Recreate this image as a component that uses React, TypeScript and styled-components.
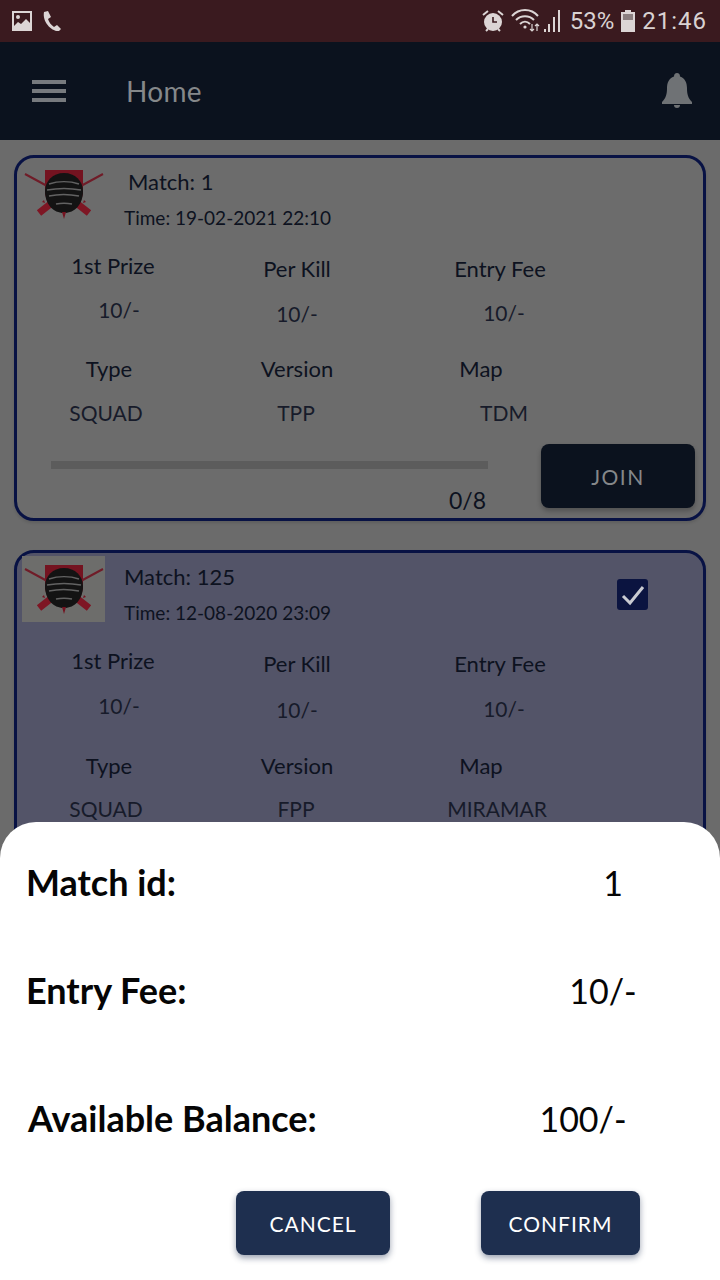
import React from "react";
import styled, { createGlobalStyle } from "styled-components";

const Global = createGlobalStyle`
  html, body { margin: 0; padding: 0; background: #6b6b6b; }
  * { box-sizing: border-box; }
`;

const Screen = styled.div`
  position: relative;
  width: 720px;
  height: 1280px;
  overflow: hidden;
  background: #6b6b6b;
  font-family: Lato, "Liberation Sans", sans-serif;
  display: flex;
  flex-direction: column;
`;

const StatusBar = styled.div`
  flex: none;
  height: 42px;
  background: #3a1a1f;
  color: #d9d2d2;
  display: flex;
  align-items: center;
  justify-content: space-between;
  padding: 0 13px 0 11px;
`;
const StatusGroup = styled.div<{ $gap?: number }>`
  display: flex;
  align-items: center;
  gap: ${(p) => p.$gap ?? 8}px;
`;
const StatusText = styled.span<{ $ls?: number }>`
  font-family: Roboto, sans-serif;
  font-size: 24px;
  line-height: 42px;
  letter-spacing: ${(p) => p.$ls ?? 0}px;
`;

const AppBar = styled.header`
  flex: none;
  height: 98px;
  background: #0b121e;
  display: flex;
  align-items: center;
  padding: 0 28px 0 32px;
`;
const Burger = styled.div`
  width: 34px;
  height: 22px;
  display: flex;
  flex-direction: column;
  justify-content: space-between;
  margin-right: 60px;
  & > i {
    display: block;
    height: 4px;
    background: #777a7e;
  }
`;
const Title = styled.div`
  flex: 1;
  color: #85888a;
  font-size: 28px;
  letter-spacing: 0.3px;
`;

const List = styled.main`
  flex: 1;
  padding: 15px 14px 0;
  display: flex;
  flex-direction: column;
  gap: 29px;
`;
const Card = styled.section<{ $selected?: boolean }>`
  flex: none;
  border: 3px solid #081244;
  border-radius: 20px;
  background: ${(p) => (p.$selected ? "#535468" : "#6c6c6c")};
  padding: ${(p) => (p.$selected ? "3px 5px 0" : "10px 0 0 0")};
  height: ${(p) => (p.$selected ? "400px" : "366px")};
  box-shadow: 0 2px 3px rgba(0, 0, 0, 0.12);
`;
const CardHead = styled.div<{ $selected?: boolean }>`
  display: flex;
  align-items: flex-start;
  height: ${(p) => (p.$selected ? "90px" : "83px")};
  padding-right: ${(p) => (p.$selected ? "50px" : "0")};
`;
const Thumb = styled.div<{ $selected?: boolean }>`
  flex: none;
  width: ${(p) => (p.$selected ? "83px" : "84px")};
  height: ${(p) => (p.$selected ? "66px" : "52px")};
  margin-left: ${(p) => (p.$selected ? "0" : "5px")};
  background: ${(p) => (p.$selected ? "#6d6d6b" : "transparent")};
  display: flex;
  align-items: center;
  justify-content: center;
`;
const HeadText = styled.div<{ $selected?: boolean }>`
  flex: 1;
  padding-left: ${(p) => (p.$selected ? "19px" : "18px")};
  color: #0d1220;
`;
const MatchLine = styled.div<{ $selected?: boolean }>`
  font-size: 22px;
  line-height: 28px;
  margin-left: ${(p) => (p.$selected ? "0" : "4px")};
  margin-top: ${(p) => (p.$selected ? "7px" : "0")};
`;
const TimeLine = styled.div`
  font-size: 19px;
  line-height: 24px;
  margin-top: 10px;
  white-space: nowrap;
`;
const Checkbox = styled.div`
  flex: none;
  width: 31px;
  height: 31px;
  margin-top: 23px;
  border-radius: 3px;
  background: #0b1440;
  display: flex;
  align-items: center;
  justify-content: center;
`;

const StatGrid = styled.div<{ $selected?: boolean }>`
  display: grid;
  grid-template-columns: 192px 176px 230px;
  grid-auto-rows: 46px;
  margin-left: ${(p) => (p.$selected ? "-5px" : "0")};
  row-gap: ${(p) => (p.$selected ? "4px" : "3px")};
`;
const StatCell = styled.div<{ $dx?: number; $dy?: number; $label?: boolean }>`
  text-align: center;
  color: ${(p) => (p.$label ? "#0d1220" : "#171b2a")};
  font-size: ${(p) => (p.$label ? 22 : 21)}px;
  line-height: 30px;
  white-space: nowrap;
  margin-left: ${(p) => p.$dx ?? 0}px;
  margin-top: ${(p) => p.$dy ?? 0}px;
`;

const Footer = styled.div`
  display: flex;
  align-items: flex-start;
  padding: 0 8px 0 34px;
`;
const ProgressWrap = styled.div`
  flex: 1;
  padding-top: 17px;
  margin-right: 53px;
`;
const Track = styled.div`
  height: 8px;
  background: #5c5c5c;
`;
const Count = styled.div`
  text-align: right;
  font-size: 23px;
  line-height: 30px;
  color: #0d1220;
  margin-top: 16px;
  padding-right: 2px;
`;
const JoinButton = styled.button`
  flex: none;
  width: 154px;
  height: 64px;
  border: 0;
  border-radius: 8px;
  background: #0b121e;
  color: #85888a;
  font: 400 21px Lato, sans-serif;
  letter-spacing: 1.5px;
  box-shadow: 0 3px 5px rgba(0, 0, 0, 0.25);
`;

const Sheet = styled.aside`
  position: absolute;
  left: 0;
  right: 0;
  top: 822px;
  bottom: 0;
  background: #fff;
  border-radius: 36px 36px 0 0;
  color: #050505;
`;
const SheetRow = styled.div<{ $top: number; $left: number }>`
  display: grid;
  grid-template-columns: 1fr 160px;
  align-items: center;
  height: 50px;
  margin-top: ${(p) => p.$top}px;
  padding-left: ${(p) => p.$left}px;
  margin-right: 37px;
`;
const SheetLabel = styled.div`
  font-size: 36px;
  font-weight: 700;
  white-space: nowrap;
`;
const SheetValue = styled.div<{ $dx?: number }>`
  font-size: 34px;
  text-align: center;
  margin-left: ${(p) => p.$dx ?? 0}px;
`;
const SheetActions = styled.div`
  display: flex;
  gap: 91px;
  padding: 48px 0 0 236px;
`;
const SheetButton = styled.button<{ $w: number }>`
  width: ${(p) => p.$w}px;
  height: 64px;
  border: 0;
  border-radius: 8px;
  background: #1e2f4f;
  color: #fff;
  font: 400 21px Lato, sans-serif;
  letter-spacing: 1px;
  box-shadow: 0 3px 6px rgba(30, 47, 79, 0.45);
`;

const Logo = () => (
  <svg width="80" height="52" viewBox="0 0 80 52" aria-hidden="true">
    <path d="M21 2h38v24l-4 14H25l-4-14z" fill="#741320" />
    <path d="M1 6l24 13M79 6L55 19" stroke="#701c28" strokeWidth="2" />
    <path d="M29 34L15 45M51 34l14 11" stroke="#7e1624" strokeWidth="7" />
    <path d="M40 5c11 0 19 8 19 18 0 13-8 22-19 22S21 36 21 23C21 13 29 5 40 5z" fill="#131313" />
    <path d="M25 16c9-3 21-3 30 0M23 22c11-2 23-2 34 0M25 28c9-2 20-2 30 0M32 36c5-1 11-1 16 0" stroke="#626262" strokeWidth="1.500" fill="none" />
    <path d="M38 44l2 7 2-7zM20 32l-2 2 3 1zM60 32l2 2-3 1z" fill="#741320" />
  </svg>
);

const ImageIcon = () => (
  <svg width="22" height="22" viewBox="0 0 22 22" aria-hidden="true">
    <path d="M1 1h20v20H1z" fill="#dcd5d5" />
    <path d="M3 3h16v10l-4-4-5 5-3-2-4 4z" fill="#3a1a1f" />
    <circle cx="7" cy="7" r="2" fill="#dcd5d5" />
  </svg>
);
const PhoneIcon = () => (
  <svg width="20" height="22" viewBox="0 0 20 22" aria-hidden="true">
    <path d="M2 2l4-1 3 6-3 2c1 3 3 6 6 8l3-2 4 4-2 2C10 22 0 12 2 2z" fill="#dcd5d5" />
  </svg>
);
const AlarmIcon = () => (
  <svg width="22" height="24" viewBox="0 0 22 24" aria-hidden="true">
    <circle cx="11" cy="13" r="9" fill="#dcd5d5" />
    <path d="M1 6l5-4M21 6l-5-4M4 22l2-2M18 22l-2-2" stroke="#dcd5d5" strokeWidth="2" />
    <path d="M11 8v5h4" stroke="#3a1a1f" strokeWidth="1.600" fill="none" />
  </svg>
);
const SignalIcon = () => (
  <svg width="52" height="26" viewBox="0 0 52 26" aria-hidden="true">
    <g fill="none" stroke="#dcd5d5" strokeWidth="2">
      <path d="M1 8c7-8 19-8 26 0M5 12c5-5 13-5 18 0M9 16c3-3 7-3 10 0" />
    </g>
    <circle cx="14" cy="19" r="1.600" fill="#dcd5d5" />
    <path d="M21 16v7M19 21l2 2 2-2M26 23v-7M24 18l2-2 2 2" stroke="#dcd5d5" strokeWidth="1.200" fill="none" />
    <path d="M33 21h2v3h-2zM37 16h2v8h-2zM42 9h2v15h-2zM47 2h2v22h-2z" fill="#dcd5d5" />
  </svg>
);
const BatteryIcon = () => (
  <svg width="14" height="22" viewBox="0 0 14 22" aria-hidden="true">
    <path d="M4 0h6v2h4v20H0V2h4z" fill="#dcd5d5" />
    <path d="M2 4h10v6H2z" fill="#8b7f80" />
  </svg>
);
const BellIcon = () => (
  <svg width="30" height="36" viewBox="0 0 30 36" aria-hidden="true">
    <path d="M15 0c2 0 3 1.400 3 3.500C23 5 25 10 25 15c0 6 1 10 5 14v2H0v-2c4-4 5-8 5-14C5 10 7 5 12 3.500 12 1.400 13 0 15 0z" fill="#6f7275" />
    <path d="M12 32h6a3 3 0 0 1-6 0z" fill="#6f7275" />
  </svg>
);
const CheckIcon = () => (
  <svg width="24" height="22" viewBox="0 0 24 22" aria-hidden="true">
    <path d="M2 12l7 7L22 3" stroke="#c9cbd2" strokeWidth="3" fill="none" />
  </svg>
);

type Cell = { t: string; dx?: number; dy?: number; label?: boolean };

const card1: Cell[] = [
  { t: "1st Prize", label: true },
  { t: "Per Kill", label: true, dy: 3 },
  { t: "Entry Fee", label: true, dy: 3 },
  { t: "10/-", dx: 12, dy: -5 },
  { t: "10/-", dy: -1 },
  { t: "10/-", dx: 8, dy: -2 },
  { t: "Type", label: true, dx: -8, dy: 5 },
  { t: "Version", dy: 5, label: true },
  { t: "Map", label: true, dx: -38, dy: 5 },
  { t: "SQUAD", dx: -14, dy: 0 },
  { t: "TPP", dx: -2, dy: 0 },
  { t: "TDM", dx: 8, dy: 0 },
];
const card2: Cell[] = card1.map((c, i) =>
  i === 10
    ? { ...c, t: "FPP", dy: -2 }
    : i === 11
    ? { ...c, t: "MIRAMAR", dx: -6, dy: -2 }
    : i === 9
    ? { ...c, dy: -2 }
    : c
);

const Stats = ({ cells, selected }: { cells: Cell[]; selected?: boolean }) => (
  <StatGrid $selected={selected}>
    {cells.map((c, i) => (
      <StatCell key={i} $label={c.label} $dx={c.dx} $dy={c.dy}>
        {c.t}
      </StatCell>
    ))}
  </StatGrid>
);

export default function App() {
  return (
    <Screen>
      <Global />
      <StatusBar>
        <StatusGroup $gap={9}>
          <ImageIcon />
          <PhoneIcon />
        </StatusGroup>
        <StatusGroup $gap={7}>
          <AlarmIcon />
          <SignalIcon />
          <StatusText>53%</StatusText>
          <BatteryIcon />
          <StatusText $ls={1}>21:46</StatusText>
        </StatusGroup>
      </StatusBar>
      <AppBar>
        <Burger>
          <i />
          <i />
          <i />
        </Burger>
        <Title>Home</Title>
        <BellIcon />
      </AppBar>
      <List>
        <Card>
          <CardHead>
            <Thumb>
              <Logo />
            </Thumb>
            <HeadText>
              <MatchLine>Match: 1</MatchLine>
              <TimeLine>Time: 19-02-2021 22:10</TimeLine>
            </HeadText>
          </CardHead>
          <Stats cells={card1} />
          <Footer>
            <ProgressWrap>
              <Track />
              <Count>0/8</Count>
            </ProgressWrap>
            <JoinButton>JOIN</JoinButton>
          </Footer>
        </Card>
        <Card $selected>
          <CardHead $selected>
            <Thumb $selected>
              <Logo />
            </Thumb>
            <HeadText $selected>
              <MatchLine $selected>Match: 125</MatchLine>
              <TimeLine>Time: 12-08-2020 23:09</TimeLine>
            </HeadText>
            <Checkbox>
              <CheckIcon />
            </Checkbox>
          </CardHead>
          <Stats cells={card2} selected />
        </Card>
      </List>
      <Sheet>
        <SheetRow $top={35} $left={26}>
          <SheetLabel>Match id:</SheetLabel>
          <SheetValue $dx={20}>1</SheetValue>
        </SheetRow>
        <SheetRow $top={58} $left={26}>
          <SheetLabel>Entry Fee:</SheetLabel>
          <SheetValue>10/-</SheetValue>
        </SheetRow>
        <SheetRow $top={78} $left={28}>
          <SheetLabel>Available Balance:</SheetLabel>
          <SheetValue $dx={-40}>100/-</SheetValue>
        </SheetRow>
        <SheetActions>
          <SheetButton $w={154}>CANCEL</SheetButton>
          <SheetButton $w={159}>CONFIRM</SheetButton>
        </SheetActions>
      </Sheet>
    </Screen>
  );
}
